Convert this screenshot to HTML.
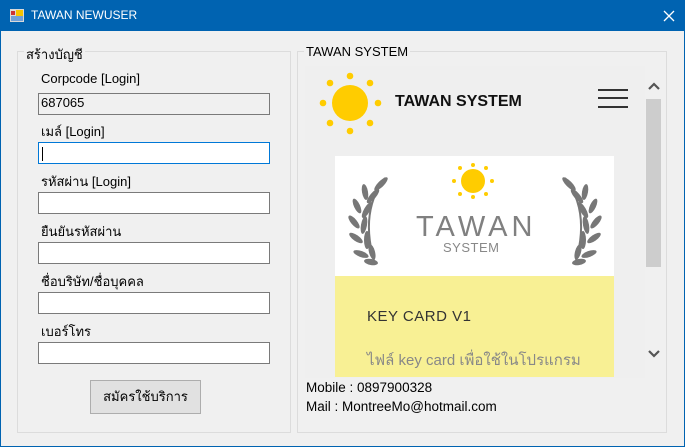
<!DOCTYPE html>
<html><head><meta charset="utf-8"><style>
*{margin:0;padding:0;box-sizing:border-box}
body{width:685px;height:447px;overflow:hidden;background:#f0f0f0;font-family:"Liberation Sans","Noto Sans CJK SC",sans-serif;font-size:13px;color:#000;position:relative}
.a{position:absolute}
.title{left:0;top:0;width:685px;height:31px;background:#0063b1;color:#fff}
.grp{border:1px solid #dcdcdc}
.lbl{background:#f0f0f0;padding:0 2px;font-size:13px}
.in{background:#fff;border:1px solid #7a7a7a;width:232px;height:22px;left:38px}
.fl{left:41px;font-size:13px}
</style></head><body>
<div class="a title">
 <svg class="a" style="left:10px;top:9px" width="14" height="13"><rect x="0" y="0" width="14" height="13" fill="#d9d9d9"/><rect x="1" y="2" width="4" height="4" fill="#c33"/><rect x="6" y="1" width="7" height="6" fill="#f5c400"/><rect x="1" y="7" width="12" height="5" fill="#6fa0d8"/></svg>
 <div class="a" style="left:31px;top:8px;font-size:12px">TAWAN NEWUSER</div>
 <svg class="a" style="left:663px;top:10px" width="12" height="12"><path d="M1 1L11 11M11 1L1 11" stroke="#fff" stroke-width="1.3"/></svg>
</div>
<div class="a" style="left:0;top:31px;width:685px;height:416px;border:1px solid #0063b1;border-top:none"></div>

<div class="a grp" style="left:17px;top:51px;width:274px;height:382px"></div>
<div class="a lbl" style="left:24px;top:44px">สร้างบัญชี</div>
<div class="a fl" style="top:71px">Corpcode [Login]</div>
<div class="a in" style="top:93px;background:#f0f0f0;padding:1px 2px">687065</div>
<div class="a fl" style="top:121px">เมล์ [Login]</div>
<div class="a in" style="top:142px;border-color:#0078d7"><div class="a" style="left:3px;top:4px;width:1px;height:14px;background:#000"></div></div>
<div class="a fl" style="top:171px">รหัสผ่าน [Login]</div>
<div class="a in" style="top:192px"></div>
<div class="a fl" style="top:221px">ยืนยันรหัสผ่าน</div>
<div class="a in" style="top:242px"></div>
<div class="a fl" style="top:271px">ชื่อบริษัท/ชื่อบุคคล</div>
<div class="a in" style="top:292px"></div>
<div class="a fl" style="top:321px">เบอร์โทร</div>
<div class="a in" style="top:342px"></div>
<div class="a" style="left:90px;top:380px;width:111px;height:34px;background:#e1e1e1;border:1px solid #adadad;text-align:center;line-height:32px">สมัครใช้บริการ</div>

<div class="a grp" style="left:297px;top:51px;width:370px;height:382px"></div>
<div class="a lbl" style="left:304px;top:44px">TAWAN SYSTEM</div>
<div class="a" style="left:305px;top:66px;width:340px;height:312px;background:#efefef"></div>
<svg class="a" style="left:318px;top:72px" width="64" height="64">
 <circle cx="32" cy="31" r="18" fill="#ffcc00"/>
 <g fill="#ffcc00"><circle cx="32" cy="4" r="3.3"/><circle cx="32" cy="59" r="3.3"/><circle cx="5" cy="31" r="3.3"/><circle cx="60" cy="31" r="3.3"/><circle cx="12" cy="11" r="3.3"/><circle cx="52" cy="11" r="3.3"/><circle cx="12" cy="51" r="3.3"/><circle cx="52" cy="51" r="3.3"/></g>
</svg>
<div class="a" style="left:395px;top:93px;font-weight:bold;font-size:16px;color:#111">TAWAN SYSTEM</div>
<div class="a" style="left:598px;top:89px;width:30px;height:2px;background:#333"></div>
<div class="a" style="left:598px;top:97px;width:30px;height:2px;background:#333"></div>
<div class="a" style="left:598px;top:106px;width:30px;height:2px;background:#333"></div>
<svg class="a" style="left:646px;top:80px" width="16" height="12"><path d="M3 9L8 4L13 9" stroke="#555" stroke-width="2.2" fill="none"/></svg>
<div class="a" style="left:646px;top:99px;width:15px;height:168px;background:#cdcdcd"></div>
<svg class="a" style="left:646px;top:348px" width="16" height="12"><path d="M3 3L8 8L13 3" stroke="#555" stroke-width="2.2" fill="none"/></svg>

<div class="a" style="left:335px;top:156px;width:279px;height:121px;background:#fff"></div>
<div class="a" style="left:335px;top:276px;width:279px;height:101px;background:#f8f094"></div>
<svg class="a" style="left:450px;top:162px" width="46" height="42">
 <circle cx="23" cy="19" r="12" fill="#ffcc00"/>
 <g fill="#ffcc00"><circle cx="23" cy="3" r="2"/><circle cx="23" cy="35" r="2"/><circle cx="4" cy="19" r="2"/><circle cx="42" cy="19" r="2"/><circle cx="10" cy="6" r="2"/><circle cx="36" cy="6" r="2"/><circle cx="10" cy="32" r="2"/><circle cx="36" cy="32" r="2"/></g>
</svg>
<svg class="a" style="left:345px;top:172px" width="50" height="96">
 <g fill="#777">
 <path d="M40 6 Q14 40 30 92" stroke="#777" stroke-width="2" fill="none"/>
 <ellipse cx="36" cy="12" rx="3" ry="9" transform="rotate(45 36 12)"/>
 <ellipse cx="28" cy="24" rx="3" ry="9" transform="rotate(40 28 24)"/>
 <ellipse cx="20" cy="20" rx="3" ry="8" transform="rotate(-10 20 20)"/>
 <ellipse cx="22" cy="38" rx="3" ry="9" transform="rotate(30 22 38)"/>
 <ellipse cx="12" cy="34" rx="3" ry="8" transform="rotate(-25 12 34)"/>
 <ellipse cx="19" cy="53" rx="3" ry="9" transform="rotate(10 19 53)"/>
 <ellipse cx="9" cy="50" rx="3" ry="8" transform="rotate(-40 9 50)"/>
 <ellipse cx="22" cy="68" rx="3" ry="9" transform="rotate(0 22 68)"/>
 <ellipse cx="11" cy="66" rx="3" ry="8" transform="rotate(-55 11 66)"/>
 <ellipse cx="27" cy="80" rx="3" ry="8" transform="rotate(-15 27 80)"/>
 <ellipse cx="16" cy="82" rx="3" ry="8" transform="rotate(-70 16 82)"/>
 <ellipse cx="26" cy="90" rx="3" ry="7" transform="rotate(-80 26 90)"/>
 </g>
</svg>
<svg class="a" style="left:555px;top:172px;transform:scaleX(-1)" width="50" height="96">
 <g fill="#777">
 <path d="M40 6 Q14 40 30 92" stroke="#777" stroke-width="2" fill="none"/>
 <ellipse cx="36" cy="12" rx="3" ry="9" transform="rotate(45 36 12)"/>
 <ellipse cx="28" cy="24" rx="3" ry="9" transform="rotate(40 28 24)"/>
 <ellipse cx="20" cy="20" rx="3" ry="8" transform="rotate(-10 20 20)"/>
 <ellipse cx="22" cy="38" rx="3" ry="9" transform="rotate(30 22 38)"/>
 <ellipse cx="12" cy="34" rx="3" ry="8" transform="rotate(-25 12 34)"/>
 <ellipse cx="19" cy="53" rx="3" ry="9" transform="rotate(10 19 53)"/>
 <ellipse cx="9" cy="50" rx="3" ry="8" transform="rotate(-40 9 50)"/>
 <ellipse cx="22" cy="68" rx="3" ry="9" transform="rotate(0 22 68)"/>
 <ellipse cx="11" cy="66" rx="3" ry="8" transform="rotate(-55 11 66)"/>
 <ellipse cx="27" cy="80" rx="3" ry="8" transform="rotate(-15 27 80)"/>
 <ellipse cx="16" cy="82" rx="3" ry="8" transform="rotate(-70 16 82)"/>
 <ellipse cx="26" cy="90" rx="3" ry="7" transform="rotate(-80 26 90)"/>
 </g>
</svg>
<div class="a" style="left:416px;top:211px;font-size:29px;letter-spacing:4px;color:#808080">TAWAN</div>
<div class="a" style="left:443px;top:240px;font-size:13px;color:#888;letter-spacing:0.5px">SYSTEM</div>
<div class="a" style="left:367px;top:308px;font-size:15px;color:#333;letter-spacing:0.5px">KEY CARD V1</div>
<div class="a" style="left:367px;top:348px;font-size:15px;color:#888">ไฟล์ key card เพื่อใช้ในโปรแกรม</div>
<div class="a" style="left:306px;top:380px;font-size:13.5px">Mobile : 0897900328</div>
<div class="a" style="left:306px;top:399px;font-size:13.5px">Mail : MontreeMo@hotmail.com</div>
</body></html>
